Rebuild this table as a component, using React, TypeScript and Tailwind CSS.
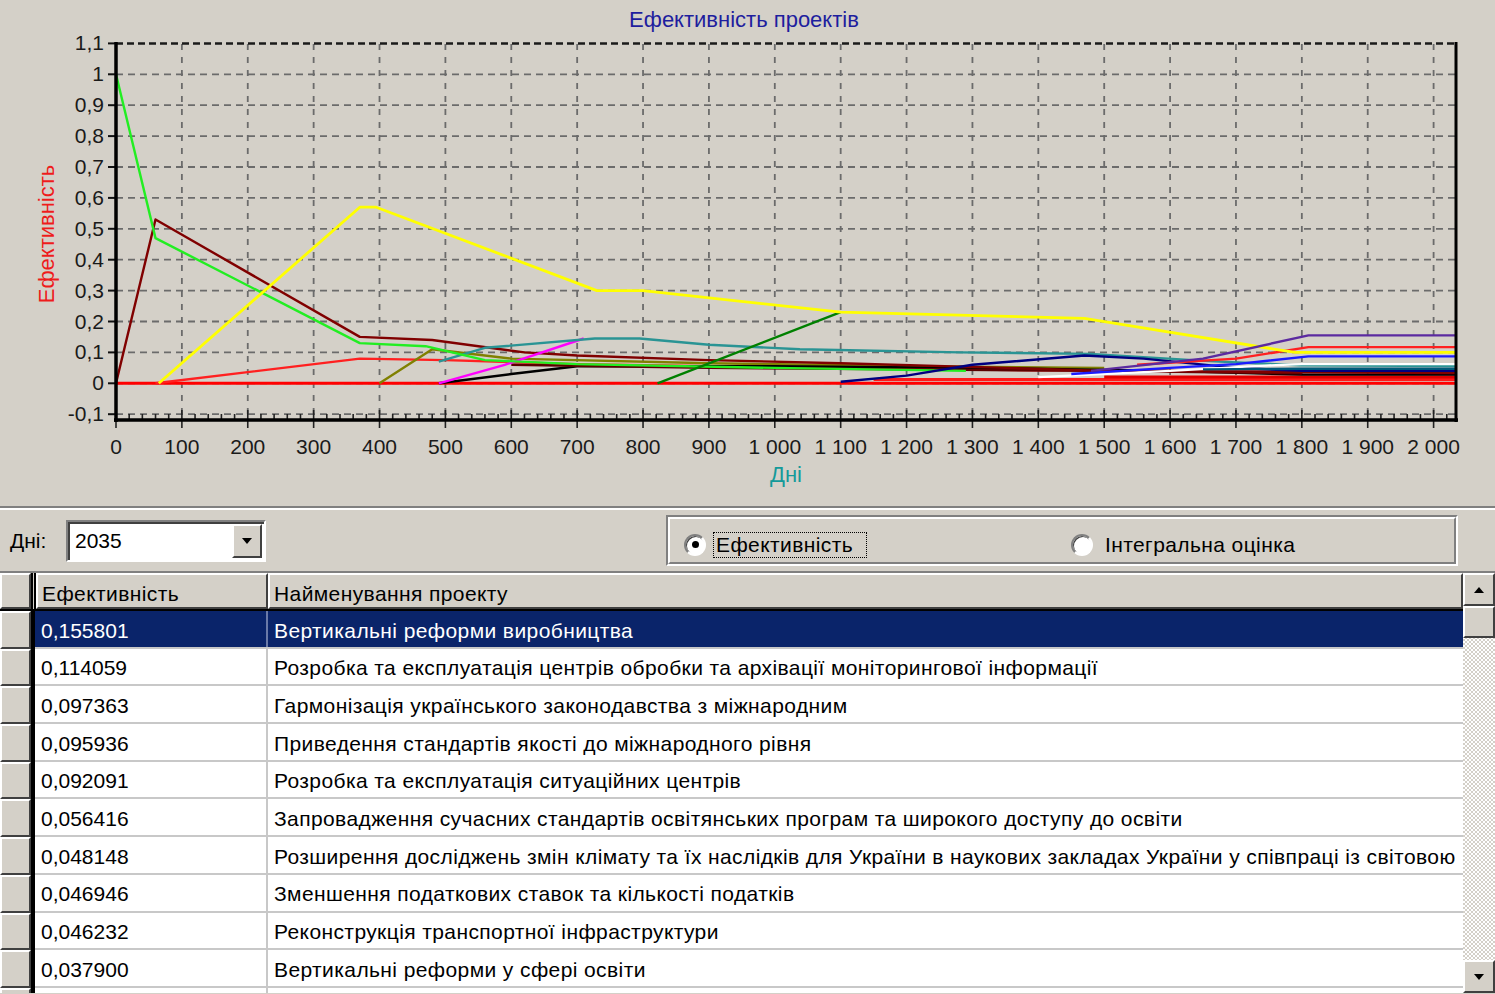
import React from 'react';

const X = (d: number) => 116 + d * 0.6588;
const Y = (v: number) => 383.3 - v * 309;

type Series = { color: string; w?: number; pts: [number, number][] };

const series: Series[] = [
  { color: '#ff0000', w: 3, pts: [[0, 0], [2035, 0]] },
  { color: '#ff1a1a', w: 3, pts: [[1150, 0.012], [2035, 0.012]] },
  { color: '#e00000', w: 3, pts: [[1500, 0.02], [2035, 0.02]] },
  { color: '#ff2020', pts: [[60, 0], [370, 0.08], [500, 0.075], [700, 0.062], [1000, 0.052], [1400, 0.042], [2035, 0.035]] },
  { color: '#808000', pts: [[400, 0], [480, 0.11], [600, 0.08], [900, 0.065], [1200, 0.055], [1500, 0.05]] },
  { color: '#000000', pts: [[490, 0], [600, 0.03], [700, 0.055], [1000, 0.055], [1300, 0.05], [1600, 0.04], [1800, 0.028], [2035, 0.028]] },
  { color: '#5a0000', pts: [[600, 0.06], [900, 0.05], [1200, 0.045], [1500, 0.04], [1800, 0.032]] },
  { color: '#800000', pts: [[0, 0], [60, 0.53], [370, 0.15], [480, 0.14], [620, 0.1], [700, 0.09], [900, 0.075], [1100, 0.065], [1350, 0.05], [1500, 0.04], [2035, 0.033]] },
  { color: '#ff00ff', pts: [[490, 0], [590, 0.06], [710, 0.145]] },
  { color: '#2a9494', pts: [[490, 0.07], [560, 0.115], [727, 0.145], [795, 0.145], [900, 0.125], [1038, 0.11], [1281, 0.1], [1478, 0.095], [1660, 0.072], [1797, 0.058], [2035, 0.056]] },
  { color: '#22ee22', pts: [[0, 1.0], [60, 0.47], [370, 0.13], [470, 0.12], [560, 0.075], [700, 0.062], [1000, 0.05], [1290, 0.04]] },
  { color: '#008000', pts: [[822, 0], [1100, 0.23]] },
  { color: '#000080', pts: [[1100, 0.005], [1200, 0.025], [1300, 0.06], [1470, 0.09], [1560, 0.08], [1700, 0.05], [1800, 0.04], [2035, 0.04]] },
  { color: '#ffffff', pts: [[1400, 0.02], [1600, 0.04], [1750, 0.058], [1800, 0.062], [2035, 0.062]] },
  { color: '#005a7a', pts: [[1650, 0.045], [1800, 0.047], [2035, 0.047]] },
  { color: '#1c1cff', pts: [[1450, 0.03], [1600, 0.05], [1700, 0.062], [1810, 0.087], [2035, 0.087]] },
  { color: '#ff2020', pts: [[1550, 0.06], [1700, 0.08], [1810, 0.117], [2035, 0.117]] },
  { color: '#ffff00', w: 2.8, pts: [[65, 0], [370, 0.57], [395, 0.57], [730, 0.3], [800, 0.3], [1100, 0.23], [1470, 0.21], [1760, 0.11], [1790, 0.1], [2035, 0.1]] },
  { color: '#5b2aa0', pts: [[1480, 0.04], [1650, 0.08], [1810, 0.155], [2035, 0.155]] },
];

const yTicks = [1.1, 1, 0.9, 0.8, 0.7, 0.6, 0.5, 0.4, 0.3, 0.2, 0.1, 0, -0.1];
const xTicks = Array.from({ length: 21 }, (_, i) => i * 100);
const fmtY = (v: number) => (Math.round(v * 10) / 10).toString().replace('.', ',');
const fmtX = (d: number) => (d >= 1000 ? `${Math.floor(d / 1000)} ${String(d % 1000).padStart(3, '0')}` : String(d));

function Chart() {
  return (
    <svg width={1495} height={506} className="block" fontFamily="'Liberation Sans', Arial, sans-serif">
      <text x={744} y={27} textAnchor="middle" fontSize={22} fill="#1e1e9e">Ефективність проектів</text>
      <text transform="translate(54 234) rotate(-90)" textAnchor="middle" fontSize={22} fill="#ee1c1c">Ефективність</text>

      {/* grid */}
      {yTicks.slice(1).map((v) => (
        <line key={v} x1={116} x2={1456} y1={Y(v)} y2={Y(v)} stroke="#6b6b6b" strokeWidth={1.8} strokeDasharray="7 5" />
      ))}
      {xTicks.slice(1).map((d) => (
        <line key={d} x1={X(d)} x2={X(d)} y1={44} y2={420} stroke="#6b6b6b" strokeWidth={1.8} strokeDasharray="6 7" />
      ))}
      <line x1={116} x2={1456} y1={43.5} y2={43.5} stroke="#1a1a1a" strokeWidth={2.4} strokeDasharray="7 4" />

      {/* y ticks and labels */}
      {yTicks.map((v) => (
        <g key={v}>
          <line x1={108} x2={116} y1={Y(v)} y2={Y(v)} stroke="#111" strokeWidth={2} />
          <text x={104} y={Y(v) + 7} textAnchor="end" fontSize={21} fill="#1a1a1a">{fmtY(v)}</text>
        </g>
      ))}

      {/* x minor/major ticks */}
      {Array.from({ length: 102 }, (_, i) => i * 20).map((d) => (
        <line key={d} x1={X(d)} x2={X(d)} y1={d % 100 === 0 ? 410 : 414} y2={d % 100 === 0 ? 428 : 421} stroke="#222" strokeWidth={1.6} />
      ))}
      {xTicks.map((d) => (
        <text key={d} x={X(d)} y={454} textAnchor="middle" fontSize={21} fill="#1a1a1a">{fmtX(d)}</text>
      ))}
      <text x={786} y={482} textAnchor="middle" fontSize={22} fill="#149a9a">Дні</text>

      {/* series */}
      {series.map((s, i) => (
        <polyline
          key={i}
          points={s.pts.map(([d, v]) => `${X(d).toFixed(1)},${Y(v).toFixed(1)}`).join(' ')}
          fill="none"
          stroke={s.color}
          strokeWidth={s.w ?? 2.4}
          strokeLinejoin="round"
        />
      ))}

      {/* frame */}
      <line x1={116} x2={116} y1={42} y2={422} stroke="#000" strokeWidth={3.5} />
      <line x1={1456} x2={1456} y1={42} y2={422} stroke="#000" strokeWidth={3} />
      <line x1={114} x2={1458} y1={420} y2={420} stroke="#000" strokeWidth={3.5} />
    </svg>
  );
}

const rows: [string, string][] = [
  ['0,155801', 'Вертикальні реформи виробництва'],
  ['0,114059', 'Розробка та експлуатація центрів обробки та архівації моніторингової інформації'],
  ['0,097363', 'Гармонізація українського законодавства з міжнародним'],
  ['0,095936', 'Приведення стандартів якості до міжнародного рівня'],
  ['0,092091', 'Розробка та експлуатація ситуаційних центрів'],
  ['0,056416', 'Запровадження сучасних стандартів освітянських програм та широкого доступу до освіти'],
  ['0,048148', 'Розширення досліджень змін клімату та їх наслідків для України в наукових закладах України у співпраці із світовою'],
  ['0,046946', 'Зменшення податкових ставок та кількості податків'],
  ['0,046232', 'Реконструкція транспортної інфраструктури'],
  ['0,037900', 'Вертикальні реформи у сфері освіти'],
  ['', ''],
];

const raised = 'bg-[#d4d0c8] border-t-2 border-l-2 border-t-white border-l-white border-b-2 border-r-2 border-b-[#404040] border-r-[#404040]';

function Radio({ checked }: { checked?: boolean }) {
  return (
    <span className="relative w-[22px] h-[22px] rounded-full bg-white border-2 border-t-[#808080] border-l-[#808080] border-b-white border-r-white shadow-[inset_1px_1px_0_#404040] flex items-center justify-center">
      {checked && <span className="w-[7px] h-[7px] rounded-full bg-black" />}
    </span>
  );
}

function Arrow({ up }: { up?: boolean }) {
  return (
    <svg width="12" height="8" viewBox="0 0 12 8">
      <path d={up ? 'M6 1 L11 7 L1 7 Z' : 'M1 1 L11 1 L6 7 Z'} fill="#000" />
    </svg>
  );
}

export default function App() {
  return (
    <div className="w-[1495px] h-[994px] overflow-hidden bg-[#d4d0c8] text-black text-[21px] font-['Liberation_Sans',Arial,sans-serif]">
      <Chart />
      <div className="h-[4px] border-t-2 border-t-[#808080] border-b-2 border-b-white" />

      {/* toolbar */}
      <div className="flex items-center h-[61px]">
        <span className="ml-[10px] w-[56px]">Дні:</span>
        <div className="flex items-center w-[200px] h-[42px] bg-white border-2 border-t-[#808080] border-l-[#808080] border-b-white border-r-white shadow-[inset_2px_2px_0_#404040]">
          <span className="flex-1 pl-[7px] pt-[1px]">2035</span>
          <span className={`w-[30px] h-[34px] mr-[2px] flex items-center justify-center ${raised}`}>
            <Arrow />
          </span>
        </div>
        <div className="ml-[400px] w-[792px] h-[51px] flex border-2 border-t-[#808080] border-l-[#808080] border-b-white border-r-white">
          <div className="flex-1 flex items-center pt-[8px] border-2 border-t-white border-l-white border-b-[#808080] border-r-[#808080] tracking-[0.4px]">
            <span className="ml-[14px]"><Radio checked /></span>
            <span className="ml-[8px] w-[152px] px-[2px] leading-[24px] outline outline-1 outline-dotted outline-black">Ефективність</span>
            <span className="ml-[205px]"><Radio /></span>
            <span className="ml-[12px]">Інтегральна оцінка</span>
          </div>
        </div>
      </div>

      {/* grid */}
      <div className="flex border-t-2 border-t-[#808080] h-[422px]">
        <div className="w-[1463px] overflow-hidden">
          <div className="flex h-[38px] border-b-2 border-b-black">
            <div className={`w-[31px] ${raised}`} />
            <div className="w-[5px] flex"><span className="w-[2px] bg-black" /><span className="w-[1px] bg-[#d4d0c8]" /><span className="w-[2px] bg-black" /></div>
            <div className={`w-[232px] pl-[4px] pt-[5px] flex items-center tracking-[0.4px] ${raised}`}>Ефективність</div>
            <div className={`flex-1 pl-[4px] pt-[5px] flex items-center tracking-[0.4px] ${raised}`}>Найменування проекту</div>
          </div>
          {rows.map(([v, n], i) => (
            <div key={i} className="flex h-[37.7px]">
              <div className={`w-[31px] ${raised}`} />
              <div className="w-[4px] bg-black" />
              <div className={`flex flex-1 border-b-2 border-b-[#c8c8c8] ${i === 0 ? 'bg-[#0a246a] text-white' : 'bg-white'}`}>
                <div className={`w-[233px] pl-[6px] pt-[3px] flex items-center border-r-2 ${i === 0 ? 'border-r-[#6a7aa8]' : 'border-r-[#c8c8c8]'}`}>{v}</div>
                <div className="flex-1 pl-[6px] pt-[3px] flex items-center whitespace-nowrap overflow-hidden tracking-[0.4px]">{n}</div>
              </div>
            </div>
          ))}
        </div>

        {/* scrollbar */}
        <div className="w-[32px] flex flex-col bg-[repeating-conic-gradient(#d4d0c8_0_25%,#ffffff_0_50%)] bg-[length:4px_4px]">
          <div className={`h-[33px] flex items-center justify-center ${raised}`}><Arrow up /></div>
          <div className={`h-[32px] ${raised}`} />
          <div className="flex-1" />
          <div className={`h-[33px] flex items-center justify-center ${raised}`}><Arrow /></div>
        </div>
      </div>
    </div>
  );
}
